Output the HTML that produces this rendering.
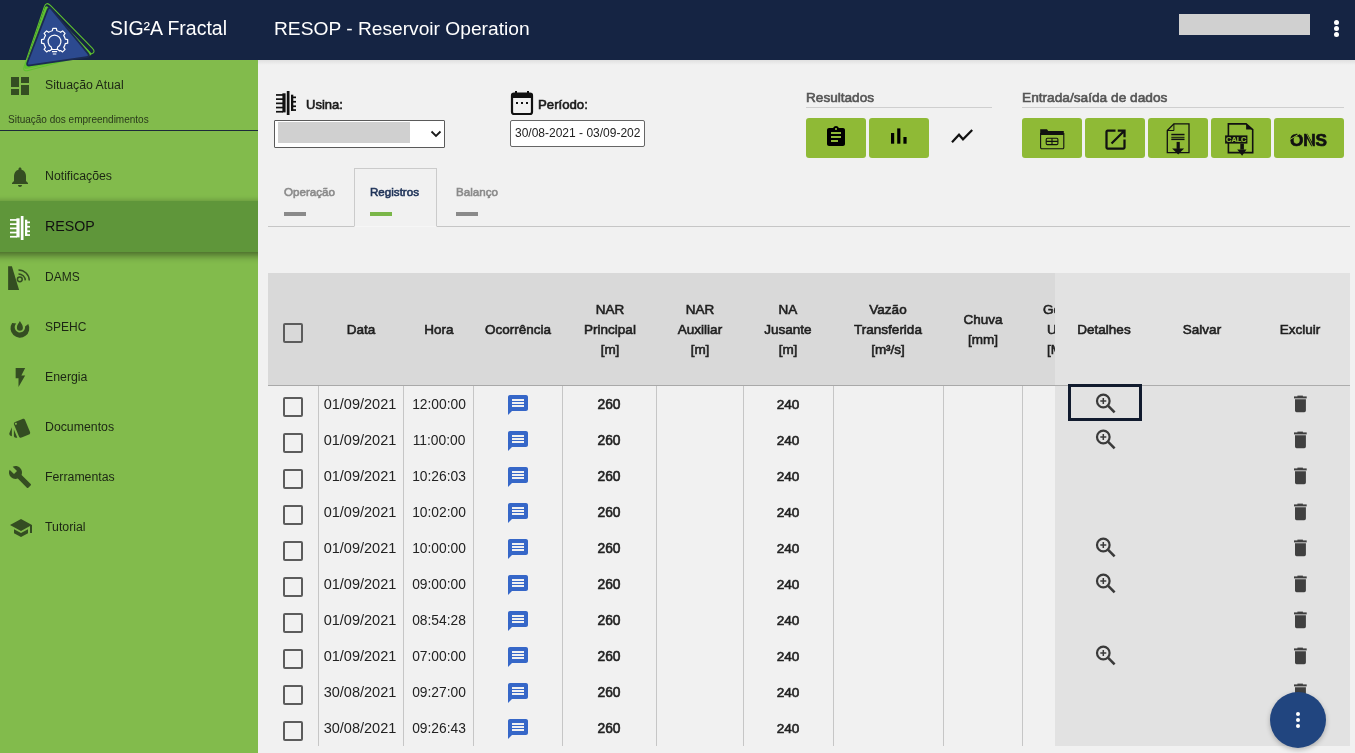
<!DOCTYPE html>
<html><head><meta charset="utf-8">
<style>
*{box-sizing:border-box;margin:0;padding:0}
html,body{width:1355px;height:753px;overflow:hidden;background:#f1f1f1;font-family:"Liberation Sans",sans-serif;color:#222}
.abs{position:absolute}
.t{position:absolute;white-space:nowrap;will-change:transform}
.gb{position:absolute;top:118px;height:40px;background:#8fba36;border-radius:3px}
.cb{position:absolute;width:20px;height:20px;border:2.4px solid #5c5c5c;border-radius:2px}
.vl{position:absolute;width:1px;background:#c6c6c6}
</style></head>
<body>
<div class="abs" style="left:0;top:0;width:1355px;height:60px;background:#152443"></div>
<div class="t" style="left:110.3px;top:19.00px;font-size:19.5px;line-height:19.5px;color:#fff;font-weight:normal;">SIG²A Fractal</div>
<div class="t" style="left:274.0px;top:19.00px;font-size:19.2px;line-height:19.2px;color:#fff;font-weight:normal;">RESOP - Reservoir Operation</div>
<div class="abs" style="left:1179px;top:14px;width:131px;height:21px;background:#d0d0d0"></div>
<div class="abs" style="left:1333.5px;top:19.5px;width:5px;height:5px;border-radius:50%;background:#fff"></div>
<div class="abs" style="left:1333.5px;top:25.5px;width:5px;height:5px;border-radius:50%;background:#fff"></div>
<div class="abs" style="left:1333.5px;top:31.5px;width:5px;height:5px;border-radius:50%;background:#fff"></div>
<div class="abs" style="left:0;top:60px;width:258px;height:693px;background:#82bb4c;overflow:hidden">
<div style="position:absolute;left:0;top:-60px;width:258px;height:753px">
<svg class="abs" style="left:8px;top:74px" width="24" height="24" viewBox="0 0 24 24"><path fill="#344d22" d="M3 13h8V3H3v10zm0 8h8v-6H3v6zm10 0h8V11h-8v10zm0-18v6h8V3h-8z"/></svg>
<div class="t" style="left:45.3px;top:79.00px;font-size:12.3px;line-height:12.3px;color:#1c2614;font-weight:normal;">Situação Atual</div>
<div class="t" style="left:8.2px;top:115.00px;font-size:10.0px;line-height:10.0px;color:#2a3a1c;font-weight:normal;">Situação dos empreendimentos</div>
<div class="abs" style="left:0;top:130px;width:258px;height:1.3px;background:#1c2a3a"></div>
<svg class="abs" style="left:8px;top:165px" width="24" height="24" viewBox="0 0 24 24"><path fill="#344d22" d="M12 22c1.1 0 2-.9 2-2h-4c0 1.1.89 2 2 2zm6-6v-5c0-3.07-1.64-5.64-4.5-6.32V4c0-.83-.67-1.5-1.5-1.5s-1.5.67-1.5 1.5v.68C7.630 5.36 6 7.92 6 11v5l-2 2v1h16v-1l-2-2z"/></svg>
<div class="t" style="left:45.3px;top:170.00px;font-size:12.3px;line-height:12.3px;color:#1c2614;font-weight:normal;">Notificações</div>
<div class="abs" style="left:-10px;top:201px;width:278px;height:51px;background:#5f963a;box-shadow:0 4px 7px rgba(0,0,0,0.38), 0 -1px 5px rgba(0,0,0,0.14)"></div>
<svg class="abs" style="left:10px;top:216px" width="20.0" height="24.0" viewBox="0 0 20 24"><g fill="#fff">
<rect x="0" y="3.1" width="7" height="1.7"/><rect x="0" y="7.3" width="7" height="1.7"/><rect x="0" y="11.5" width="7" height="1.7"/><rect x="0" y="15.7" width="7" height="1.7"/><rect x="0" y="19.9" width="7" height="1.7"/>
<rect x="6.4" y="2.3" width="3.2" height="19.1"/><rect x="10.8" y="0" width="2.7" height="24"/><rect x="15" y="3.7" width="2.3" height="16.3"/>
<rect x="15" y="5.5" width="5" height="1.7"/><rect x="15" y="9.9" width="5" height="1.7"/><rect x="15" y="14.4" width="5" height="1.7"/><rect x="15" y="18.2" width="5" height="1.7"/></g></svg>
<div class="t" style="left:44.9px;top:219.00px;font-size:14.2px;line-height:14.2px;color:#111;font-weight:normal;">RESOP</div>
<svg class="abs" style="left:6px;top:264px" width="28" height="28" viewBox="0 0 28 28"><path fill="#344d22" d="M2.1 2.2 H5.9 L13.1 26 H2.1 Z"/><g fill="none" stroke="#344d22" stroke-width="1.5"><circle cx="13.8" cy="15.3" r="2.4"/><path d="M12.5 9.9 A6.8 6.8 0 0 1 19.3 16.4"/><path d="M12.5 5.9 A10.8 10.8 0 0 1 23.3 16.6"/></g></svg>
<div class="t" style="left:45.4px;top:271.00px;font-size:12px;line-height:12px;color:#1c2614;font-weight:normal;">DAMS</div>
<svg class="abs" style="left:5px;top:315px" width="30" height="30" viewBox="0 0 30 30"><g fill="#344d22"><path d="M14.9 6 C13.6 8.5 11.9 10 11.9 12.7 A3 3 0 0 0 17.9 12.7 C17.9 10 16.2 8.5 14.9 6 Z"/><path d="M7.14 8 A9.4 9.4 0 1 0 23.26 9 L20.05 11.5 A5.2 5.2 0 1 1 11.3 8.5 Z"/></g></svg>
<div class="t" style="left:45.4px;top:321.00px;font-size:12px;line-height:12px;color:#1c2614;font-weight:normal;">SPEHC</div>
<svg class="abs" style="left:8.6px;top:366px" width="22.8" height="22.8" viewBox="0 0 24 24"><path fill="#344d22" d="M7 2v11h3v9l7-12h-4l4-8z"/></svg>
<div class="t" style="left:45.4px;top:371.00px;font-size:12.3px;line-height:12.3px;color:#1c2614;font-weight:normal;">Energia</div>
<svg class="abs" style="left:8px;top:416px" width="24" height="24" viewBox="0 0 24 24"><path fill="#344d22" d="M2.53 19.65l1.34.56v-9.03l-2.43 5.86c-.41 1.02.08 2.19 1.09 2.61zm19.5-3.7L17.07 3.98c-.31-.75-1.04-1.21-1.81-1.23-.26 0-.53.04-.79.15L7.1 5.95c-.75.31-1.21 1.03-1.23 1.8-.01.27.04.54.15.8l4.96 11.97c.31.76 1.05 1.22 1.83 1.23.26 0 .52-.05.77-.15l7.36-3.05c1.02-.42 1.51-1.59 1.09-2.6zM7.88 8.75c-.55 0-1-.45-1-1s.45-1 1-1 1 .45 1 1-.45 1-1 1zm-2 11c0 1.1.9 2 2 2h1.45l-3.45-8.34v6.34z"/></svg>
<div class="t" style="left:45.4px;top:421.00px;font-size:12.3px;line-height:12.3px;color:#1c2614;font-weight:normal;">Documentos</div>
<svg class="abs" style="left:8px;top:465px" width="24" height="24" viewBox="0 0 24 24"><path fill="#344d22" d="M22.7 19l-9.1-9.1c.9-2.3.4-5-1.5-6.9-2-2-5-2.4-7.4-1.3L9 6 6 9 1.6 4.7C.4 7.1.9 10.1 2.9 12.1c1.9 1.9 4.6 2.4 6.9 1.5l9.1 9.1c.4.4 1 .4 1.4 0l2.3-2.3c.5-.4.5-1.1.1-1.4z"/></svg>
<div class="t" style="left:45.4px;top:471.00px;font-size:12.3px;line-height:12.3px;color:#1c2614;font-weight:normal;">Ferramentas</div>
<svg class="abs" style="left:8.6px;top:516px" width="24" height="24" viewBox="0 0 24 24"><path fill="#344d22" d="M5 13.18v4L12 21l7-3.82v-4L12 17l-7-3.820zM12 3L1 9l11 6 9-4.91V17h2V9L12 3z"/></svg>
<div class="t" style="left:45.4px;top:521.00px;font-size:12.3px;line-height:12.3px;color:#1c2614;font-weight:normal;">Tutorial</div>
</div></div>
<div class="abs" style="left:258px;top:60px;width:1097px;height:5px;background:linear-gradient(rgba(0,0,0,0.07),rgba(0,0,0,0))"></div>
<svg class="abs" style="left:0;top:0" width="110" height="80" viewBox="0 0 110 80">
<path d="M50.40 5.48 Q46.20 1.20 44.28 6.88 L24.22 66.32 Q22.30 72.00 28.10 70.47 L90.70 54.03 Q96.50 52.50 92.30 48.22 Z" fill="none" stroke="#5ec12e" stroke-width="1.1"/>
<path d="M48.53 7.42 Q45.80 4.50 44.50 8.28 L24.80 65.72 Q23.50 69.50 27.42 68.68 L89.08 55.82 Q93.00 55.00 90.27 52.08 Z" fill="#5ec12e"/>
<path d="M51.55 9.29 Q49.00 6.20 47.56 9.93 L27.44 62.27 Q26.00 66.00 29.96 65.42 L86.54 57.08 Q90.50 56.50 87.95 53.41 Z" fill="#2c4a8f" stroke="#1b2b52" stroke-width="1.8"/>
<g fill="none" stroke="#fff" stroke-width="1.2" stroke-linejoin="round">
<path d="M52.48 48.80 L49.48 51.02 A10.9 10.9 0 0 1 48.62 50.51 L46.59 51.89 L44.11 49.41 L45.49 47.38 A10.9 10.9 0 0 1 43.93 43.61 L41.52 43.16 L41.52 39.64 L43.93 39.19 A10.9 10.9 0 0 1 45.49 35.42 L44.11 33.39 L46.59 30.91 L48.62 32.29 A10.9 10.9 0 0 1 52.39 30.73 L52.84 28.32 L56.36 28.32 L56.81 30.73 A10.9 10.9 0 0 1 60.58 32.29 L62.61 30.91 L65.09 33.39 L63.71 35.42 A10.9 10.9 0 0 1 65.27 39.19 L67.68 39.64 L67.68 43.16 L65.27 43.61 A10.9 10.9 0 0 1 63.71 47.38 L65.09 49.41 L62.61 51.89 L60.58 50.51 A10.9 10.9 0 0 1 59.72 51.02 L56.72 48.80 "/>
<path d="M51.3 47 A6.4 6.4 0 1 1 57.7 47 L57.2 49.5 H51.8 Z"/>
<path d="M52 51.6 H57.1 M52.8 54 H56.3"/>
</g></svg>
<svg class="abs" style="left:276px;top:91px" width="20.0" height="24.0" viewBox="0 0 20 24"><g fill="#111">
<rect x="0" y="3.1" width="7" height="1.7"/><rect x="0" y="7.3" width="7" height="1.7"/><rect x="0" y="11.5" width="7" height="1.7"/><rect x="0" y="15.7" width="7" height="1.7"/><rect x="0" y="19.9" width="7" height="1.7"/>
<rect x="6.4" y="2.3" width="3.2" height="19.1"/><rect x="10.8" y="0" width="2.7" height="24"/><rect x="15" y="3.7" width="2.3" height="16.3"/>
<rect x="15" y="5.5" width="5" height="1.7"/><rect x="15" y="9.9" width="5" height="1.7"/><rect x="15" y="14.4" width="5" height="1.7"/><rect x="15" y="18.2" width="5" height="1.7"/></g></svg>
<div class="t" style="left:306.2px;top:98.00px;font-size:13.0px;line-height:13.0px;color:#1a1a1a;font-weight:normal;-webkit-text-stroke:0.6px #1a1a1a;">Usina:</div>
<div class="abs" style="left:274px;top:120px;width:171px;height:28px;background:#fff;border:1px solid #5a5a5a;border-radius:1px"></div>
<div class="abs" style="left:278px;top:122px;width:132px;height:21px;background:#d0d0d0"></div>
<svg class="abs" style="left:430px;top:129px" width="12" height="10" viewBox="0 0 12 10"><path d="M1.5 2.5 L6 7 L10.5 2.5" fill="none" stroke="#1a1a1a" stroke-width="1.8"/></svg>
<svg class="abs" style="left:510px;top:90px" width="24" height="26" viewBox="0 0 24 26"><rect x="2" y="3.5" width="20" height="20.5" rx="2" fill="none" stroke="#111" stroke-width="2.2"/><rect x="1.5" y="3" width="21" height="5" rx="1.5" fill="#111"/><rect x="5" y="1" width="2" height="4" fill="#111"/><rect x="17" y="1" width="2" height="4" fill="#111"/><rect x="6" y="12" width="2" height="2" fill="#111"/><rect x="11" y="12" width="2" height="2" fill="#111"/><rect x="16" y="12" width="2" height="2" fill="#111"/></svg>
<div class="t" style="left:537.5px;top:98.00px;font-size:13.2px;line-height:13.2px;color:#1a1a1a;font-weight:normal;-webkit-text-stroke:0.6px #1a1a1a;">Período:</div>
<div class="abs" style="left:510px;top:120px;width:135px;height:27px;background:#fff;border:1px solid #666;border-radius:2px"></div>
<div class="abs" style="left:515px;top:121px;width:125px;height:25px;overflow:hidden"><div class="t" style="left:0.0px;top:6.00px;font-size:12px;line-height:12px;color:#222;font-weight:normal;">30/08-2021 - 03/09-2021</div>
</div>
<div class="t" style="left:806.2px;top:91.00px;font-size:13.6px;line-height:13.6px;color:#555;font-weight:normal;-webkit-text-stroke:0.6px #555;">Resultados</div>
<div class="abs" style="left:806px;top:107px;width:186px;height:1px;background:#cfcfcf"></div>
<div class="t" style="left:1022.0px;top:91.00px;font-size:13.7px;line-height:13.7px;color:#555;font-weight:normal;-webkit-text-stroke:0.6px #555;">Entrada/saída de dados</div>
<div class="abs" style="left:1022px;top:107px;width:322px;height:1px;background:#cfcfcf"></div>
<div class="gb" style="left:806px;width:60px"></div>
<div class="gb" style="left:869px;width:60px"></div>
<div class="gb" style="left:1022px;width:60px"></div>
<div class="gb" style="left:1085px;width:60px"></div>
<div class="gb" style="left:1148px;width:60px"></div>
<div class="gb" style="left:1211px;width:60px"></div>
<div class="gb" style="left:1274px;width:70px"></div>
<svg class="abs" style="left:824px;top:125px" width="24" height="24" viewBox="0 0 24 24"><path fill="#000" d="M19 3h-4.18C14.4 1.84 13.3 1 12 1c-1.3 0-2.4.84-2.82 2H5c-1.1 0-2 .9-2 2v14c0 1.1.9 2 2 2h14c1.1 0 2-.9 2-2V5c0-1.1-.9-2-2-2zm-7 0c.55 0 1 .45 1 1s-.45 1-1 1-1-.45-1-1 .45-1 1-1zm2 14H7v-2h7v2zm3-4H7v-2h10v2zm0-4H7V7h10v2z"/></svg>
<svg class="abs" style="left:888px;top:126px" width="22" height="20" viewBox="0 0 22 20"><g fill="#000"><rect x="3" y="7" width="3.2" height="10.7"/><rect x="9.2" y="2.4" width="3.2" height="15.3"/><rect x="15.4" y="11" width="3.2" height="6.7"/></g></svg>
<svg class="abs" style="left:948px;top:126px" width="28" height="20" viewBox="0 0 28 20"><path d="M4 16.2 L11 8.7 L15 13.3 L24.2 4" fill="none" stroke="#111" stroke-width="2.2"/></svg>
<svg class="abs" style="left:1038px;top:127px" width="28" height="24" viewBox="0 0 28 24"><g fill="none" stroke="#111" stroke-width="1.1"><path d="M2.6 6 V20.6 a1.2 1.2 0 0 0 1.2 1.2 H24.6 a1.2 1.2 0 0 0 1.2 -1.2 V6"/><rect x="8.2" y="11.3" width="11.7" height="6.3" rx="1.2"/><path d="M8.2 14.4 H19.9 M14 11.3 V17.6"/></g><path fill="#111" d="M2.2 2.2 H9 L10.2 4 H25.8 V8 H2.2 Z"/></svg>
<svg class="abs" style="left:1101.5px;top:125.5px" width="27" height="27" viewBox="0 0 24 24"><path fill="#111" d="M19 19H5V5h7V3H5c-1.11 0-2 .9-2 2v14c0 1.1.89 2 2 2h14c1.1 0 2-.9 2-2v-7h-2v7zM14 3v2h3.59l-9.83 9.83 1.41 1.41L19 6.41V10h2V3h-7z"/></svg>
<svg class="abs" style="left:1165px;top:121.5px" width="26" height="34" viewBox="0 0 26 34"><path d="M2.3 8.5 L8.9 1.9 H24 V30.7 H2.3 Z" fill="none" stroke="#111" stroke-width="1.3"/><path d="M2.3 8.5 L8.9 8.5 L8.9 1.9" fill="none" stroke="#111" stroke-width="1"/><g fill="#111"><rect x="6.3" y="11.8" width="13.2" height="1.5"/><rect x="6.3" y="14.8" width="13.2" height="1"/><rect x="6.3" y="16.6" width="13.2" height="1.5"/><rect x="11.6" y="19.9" width="3.2" height="7"/><path d="M7.1 26.5 H19.1 L13.2 32.4 Z"/></g></svg>
<svg class="abs" style="left:1223px;top:121.5px;will-change:transform" width="32" height="36" viewBox="0 0 32 36"><path d="M5.4 1.9 H23.1 L29.7 7.6 V30.6 H5.4 Z" fill="none" stroke="#111" stroke-width="1.6"/><path d="M23.1 1.9 L29.7 7.6 H23.1 Z" fill="#111"/><rect x="2.1" y="13.4" width="22.3" height="8.2" fill="#111"/><text x="13.25" y="20.3" text-anchor="middle" font-family="Liberation Sans" font-weight="bold" font-size="7.6" fill="#8fba36" stroke="#8fba36" stroke-width="0.2" letter-spacing="-0.2">CALC</text><rect x="17.3" y="21.6" width="3.6" height="6" fill="#111"/><path d="M14.2 27.5 H23.5 L19.1 33.8 Z" fill="#111"/></svg>
<div class="t" style="left:1289.8px;top:132.00px;font-size:17.2px;line-height:17.2px;color:#111;font-weight:bold;letter-spacing:-0.2px;-webkit-text-stroke:0.7px #111">ONS</div>
<svg class="abs" style="left:1285px;top:128px" width="50" height="22" viewBox="0 0 50 22"><path d="M19.5 1 L28 19" stroke="#8fba36" stroke-width="0.8"/><path d="M5 11.5 L14 6" stroke="#8fba36" stroke-width="1"/></svg>
<div class="abs" style="left:268px;top:226px;width:1082px;height:1px;background:#c6c6c6"></div>
<div class="abs" style="left:354px;top:168px;width:83px;height:59px;border:1px solid #cbcbcb;border-bottom:1px solid #f6f6f6;background:#f1f1f1"></div>
<div class="t" style="left:283.8px;top:186.00px;font-size:11.6px;line-height:11.6px;color:#8a8a8a;font-weight:normal;-webkit-text-stroke:0.6px #8a8a8a;">Operação</div>
<div class="abs" style="left:284px;top:212px;width:22px;height:4px;background:#8a8a8a"></div>
<div class="t" style="left:370.4px;top:186.00px;font-size:11.6px;line-height:11.6px;color:#1f3358;font-weight:normal;-webkit-text-stroke:0.6px #1f3358;">Registros</div>
<div class="abs" style="left:370px;top:212px;width:22px;height:4px;background:#7ab648"></div>
<div class="t" style="left:456.0px;top:186.00px;font-size:11.6px;line-height:11.6px;color:#8a8a8a;font-weight:normal;-webkit-text-stroke:0.6px #8a8a8a;">Balanço</div>
<div class="abs" style="left:456px;top:212px;width:22px;height:4px;background:#8a8a8a"></div>
<div class="abs" style="left:268px;top:273px;width:787px;height:112px;background:#d9d9d9"></div>
<div class="abs" style="left:268px;top:385px;width:787px;height:1px;background:#a9a9a9"></div>
<div class="vl" style="left:317.8px;top:386px;height:359.5px"></div>
<div class="vl" style="left:403.0px;top:386px;height:359.5px"></div>
<div class="vl" style="left:472.9px;top:386px;height:359.5px"></div>
<div class="vl" style="left:562.0px;top:386px;height:359.5px"></div>
<div class="vl" style="left:656.1px;top:386px;height:359.5px"></div>
<div class="vl" style="left:743.0px;top:386px;height:359.5px"></div>
<div class="vl" style="left:833.3px;top:386px;height:359.5px"></div>
<div class="vl" style="left:943.1px;top:386px;height:359.5px"></div>
<div class="vl" style="left:1022.2px;top:386px;height:359.5px"></div>
<div class="cb" style="left:283.2px;top:323px"></div>
<div class="t" style="left:260.5px;width:200px;text-align:center;top:323.00px;font-size:13.5px;line-height:13.5px;color:#1f1f1f;font-weight:normal;-webkit-text-stroke:0.6px #1f1f1f;">Data</div>
<div class="t" style="left:338.5px;width:200px;text-align:center;top:323.00px;font-size:13.5px;line-height:13.5px;color:#1f1f1f;font-weight:normal;-webkit-text-stroke:0.6px #1f1f1f;">Hora</div>
<div class="t" style="left:417.6px;width:200px;text-align:center;top:323.00px;font-size:13.5px;line-height:13.5px;color:#1f1f1f;font-weight:normal;-webkit-text-stroke:0.6px #1f1f1f;">Ocorrência</div>
<div class="t" style="left:509.6px;width:200px;text-align:center;top:303.00px;font-size:13.5px;line-height:13.5px;color:#1f1f1f;font-weight:normal;-webkit-text-stroke:0.6px #1f1f1f;">NAR</div>
<div class="t" style="left:509.6px;width:200px;text-align:center;top:323.00px;font-size:13.5px;line-height:13.5px;color:#1f1f1f;font-weight:normal;-webkit-text-stroke:0.6px #1f1f1f;">Principal</div>
<div class="t" style="left:509.6px;width:200px;text-align:center;top:343.00px;font-size:13.5px;line-height:13.5px;color:#1f1f1f;font-weight:normal;-webkit-text-stroke:0.6px #1f1f1f;">[m]</div>
<div class="t" style="left:600.0px;width:200px;text-align:center;top:303.00px;font-size:13.5px;line-height:13.5px;color:#1f1f1f;font-weight:normal;-webkit-text-stroke:0.6px #1f1f1f;">NAR</div>
<div class="t" style="left:600.0px;width:200px;text-align:center;top:323.00px;font-size:13.5px;line-height:13.5px;color:#1f1f1f;font-weight:normal;-webkit-text-stroke:0.6px #1f1f1f;">Auxiliar</div>
<div class="t" style="left:600.0px;width:200px;text-align:center;top:343.00px;font-size:13.5px;line-height:13.5px;color:#1f1f1f;font-weight:normal;-webkit-text-stroke:0.6px #1f1f1f;">[m]</div>
<div class="t" style="left:687.8px;width:200px;text-align:center;top:303.00px;font-size:13.5px;line-height:13.5px;color:#1f1f1f;font-weight:normal;-webkit-text-stroke:0.6px #1f1f1f;">NA</div>
<div class="t" style="left:687.8px;width:200px;text-align:center;top:323.00px;font-size:13.5px;line-height:13.5px;color:#1f1f1f;font-weight:normal;-webkit-text-stroke:0.6px #1f1f1f;">Jusante</div>
<div class="t" style="left:687.8px;width:200px;text-align:center;top:343.00px;font-size:13.5px;line-height:13.5px;color:#1f1f1f;font-weight:normal;-webkit-text-stroke:0.6px #1f1f1f;">[m]</div>
<div class="t" style="left:788.2px;width:200px;text-align:center;top:303.00px;font-size:13.5px;line-height:13.5px;color:#1f1f1f;font-weight:normal;-webkit-text-stroke:0.6px #1f1f1f;">Vazão</div>
<div class="t" style="left:788.2px;width:200px;text-align:center;top:323.00px;font-size:13.5px;line-height:13.5px;color:#1f1f1f;font-weight:normal;-webkit-text-stroke:0.6px #1f1f1f;">Transferida</div>
<div class="t" style="left:788.2px;width:200px;text-align:center;top:343.00px;font-size:13.5px;line-height:13.5px;color:#1f1f1f;font-weight:normal;-webkit-text-stroke:0.6px #1f1f1f;">[m³/s]</div>
<div class="t" style="left:1042.8px;top:303.00px;font-size:13.5px;line-height:13.5px;color:#1f1f1f;font-weight:normal;-webkit-text-stroke:0.6px #1f1f1f;">Geração</div>
<div class="t" style="left:1046.8px;top:323.00px;font-size:13.5px;line-height:13.5px;color:#1f1f1f;font-weight:normal;-webkit-text-stroke:0.6px #1f1f1f;">Usina</div>
<div class="t" style="left:1046.6px;top:343.00px;font-size:13.5px;line-height:13.5px;color:#1f1f1f;font-weight:normal;-webkit-text-stroke:0.6px #1f1f1f;">[MWh]</div>
<div class="t" style="left:883.0px;width:200px;text-align:center;top:313.00px;font-size:13.5px;line-height:13.5px;color:#1f1f1f;font-weight:normal;-webkit-text-stroke:0.6px #1f1f1f;">Chuva</div>
<div class="t" style="left:883.0px;width:200px;text-align:center;top:333.00px;font-size:13.5px;line-height:13.5px;color:#1f1f1f;font-weight:normal;-webkit-text-stroke:0.6px #1f1f1f;">[mm]</div>
<div class="cb" style="left:283.3px;top:397.2px"></div>
<div class="t" style="left:260.1px;width:200px;text-align:center;top:397.00px;font-size:14.5px;line-height:14.5px;color:#222;font-weight:normal;">01/09/2021</div>
<div class="t" style="left:338.6px;width:200px;text-align:center;top:398.00px;font-size:13.8px;line-height:13.8px;color:#222;font-weight:normal;">12:00:00</div>
<svg class="abs" style="left:506px;top:393px" width="24" height="24" viewBox="0 0 24 24"><path fill="#3667c8" d="M20 2H4c-1.1 0-1.99.9-1.99 2L2 22l4-4h14c1.1 0 2-.9 2-2V4c0-1.1-.9-2-2-2zm-2 12H6v-2h12v2zm0-3H6V9h12v2zm0-3H6V6h12v2z"/></svg>
<div class="t" style="left:509.3px;width:200px;text-align:center;top:398.00px;font-size:13.8px;line-height:13.8px;color:#222;font-weight:normal;-webkit-text-stroke:0.6px #222;">260</div>
<div class="t" style="left:687.8px;width:200px;text-align:center;top:398.00px;font-size:13.6px;line-height:13.6px;color:#222;font-weight:normal;-webkit-text-stroke:0.6px #222;">240</div>
<div class="cb" style="left:283.3px;top:433.2px"></div>
<div class="t" style="left:260.1px;width:200px;text-align:center;top:433.00px;font-size:14.5px;line-height:14.5px;color:#222;font-weight:normal;">01/09/2021</div>
<div class="t" style="left:338.6px;width:200px;text-align:center;top:434.00px;font-size:13.8px;line-height:13.8px;color:#222;font-weight:normal;">11:00:00</div>
<svg class="abs" style="left:506px;top:429px" width="24" height="24" viewBox="0 0 24 24"><path fill="#3667c8" d="M20 2H4c-1.1 0-1.99.9-1.99 2L2 22l4-4h14c1.1 0 2-.9 2-2V4c0-1.1-.9-2-2-2zm-2 12H6v-2h12v2zm0-3H6V9h12v2zm0-3H6V6h12v2z"/></svg>
<div class="t" style="left:509.3px;width:200px;text-align:center;top:434.00px;font-size:13.8px;line-height:13.8px;color:#222;font-weight:normal;-webkit-text-stroke:0.6px #222;">260</div>
<div class="t" style="left:687.8px;width:200px;text-align:center;top:434.00px;font-size:13.6px;line-height:13.6px;color:#222;font-weight:normal;-webkit-text-stroke:0.6px #222;">240</div>
<div class="cb" style="left:283.3px;top:469.2px"></div>
<div class="t" style="left:260.1px;width:200px;text-align:center;top:469.00px;font-size:14.5px;line-height:14.5px;color:#222;font-weight:normal;">01/09/2021</div>
<div class="t" style="left:338.6px;width:200px;text-align:center;top:470.00px;font-size:13.8px;line-height:13.8px;color:#222;font-weight:normal;">10:26:03</div>
<svg class="abs" style="left:506px;top:465px" width="24" height="24" viewBox="0 0 24 24"><path fill="#3667c8" d="M20 2H4c-1.1 0-1.99.9-1.99 2L2 22l4-4h14c1.1 0 2-.9 2-2V4c0-1.1-.9-2-2-2zm-2 12H6v-2h12v2zm0-3H6V9h12v2zm0-3H6V6h12v2z"/></svg>
<div class="t" style="left:509.3px;width:200px;text-align:center;top:470.00px;font-size:13.8px;line-height:13.8px;color:#222;font-weight:normal;-webkit-text-stroke:0.6px #222;">260</div>
<div class="t" style="left:687.8px;width:200px;text-align:center;top:470.00px;font-size:13.6px;line-height:13.6px;color:#222;font-weight:normal;-webkit-text-stroke:0.6px #222;">240</div>
<div class="cb" style="left:283.3px;top:505.2px"></div>
<div class="t" style="left:260.1px;width:200px;text-align:center;top:505.00px;font-size:14.5px;line-height:14.5px;color:#222;font-weight:normal;">01/09/2021</div>
<div class="t" style="left:338.6px;width:200px;text-align:center;top:506.00px;font-size:13.8px;line-height:13.8px;color:#222;font-weight:normal;">10:02:00</div>
<svg class="abs" style="left:506px;top:501px" width="24" height="24" viewBox="0 0 24 24"><path fill="#3667c8" d="M20 2H4c-1.1 0-1.99.9-1.99 2L2 22l4-4h14c1.1 0 2-.9 2-2V4c0-1.1-.9-2-2-2zm-2 12H6v-2h12v2zm0-3H6V9h12v2zm0-3H6V6h12v2z"/></svg>
<div class="t" style="left:509.3px;width:200px;text-align:center;top:506.00px;font-size:13.8px;line-height:13.8px;color:#222;font-weight:normal;-webkit-text-stroke:0.6px #222;">260</div>
<div class="t" style="left:687.8px;width:200px;text-align:center;top:506.00px;font-size:13.6px;line-height:13.6px;color:#222;font-weight:normal;-webkit-text-stroke:0.6px #222;">240</div>
<div class="cb" style="left:283.3px;top:541.2px"></div>
<div class="t" style="left:260.1px;width:200px;text-align:center;top:541.00px;font-size:14.5px;line-height:14.5px;color:#222;font-weight:normal;">01/09/2021</div>
<div class="t" style="left:338.6px;width:200px;text-align:center;top:542.00px;font-size:13.8px;line-height:13.8px;color:#222;font-weight:normal;">10:00:00</div>
<svg class="abs" style="left:506px;top:537px" width="24" height="24" viewBox="0 0 24 24"><path fill="#3667c8" d="M20 2H4c-1.1 0-1.99.9-1.99 2L2 22l4-4h14c1.1 0 2-.9 2-2V4c0-1.1-.9-2-2-2zm-2 12H6v-2h12v2zm0-3H6V9h12v2zm0-3H6V6h12v2z"/></svg>
<div class="t" style="left:509.3px;width:200px;text-align:center;top:542.00px;font-size:13.8px;line-height:13.8px;color:#222;font-weight:normal;-webkit-text-stroke:0.6px #222;">260</div>
<div class="t" style="left:687.8px;width:200px;text-align:center;top:542.00px;font-size:13.6px;line-height:13.6px;color:#222;font-weight:normal;-webkit-text-stroke:0.6px #222;">240</div>
<div class="cb" style="left:283.3px;top:577.2px"></div>
<div class="t" style="left:260.1px;width:200px;text-align:center;top:577.00px;font-size:14.5px;line-height:14.5px;color:#222;font-weight:normal;">01/09/2021</div>
<div class="t" style="left:338.6px;width:200px;text-align:center;top:578.00px;font-size:13.8px;line-height:13.8px;color:#222;font-weight:normal;">09:00:00</div>
<svg class="abs" style="left:506px;top:573px" width="24" height="24" viewBox="0 0 24 24"><path fill="#3667c8" d="M20 2H4c-1.1 0-1.99.9-1.99 2L2 22l4-4h14c1.1 0 2-.9 2-2V4c0-1.1-.9-2-2-2zm-2 12H6v-2h12v2zm0-3H6V9h12v2zm0-3H6V6h12v2z"/></svg>
<div class="t" style="left:509.3px;width:200px;text-align:center;top:578.00px;font-size:13.8px;line-height:13.8px;color:#222;font-weight:normal;-webkit-text-stroke:0.6px #222;">260</div>
<div class="t" style="left:687.8px;width:200px;text-align:center;top:578.00px;font-size:13.6px;line-height:13.6px;color:#222;font-weight:normal;-webkit-text-stroke:0.6px #222;">240</div>
<div class="cb" style="left:283.3px;top:613.2px"></div>
<div class="t" style="left:260.1px;width:200px;text-align:center;top:613.00px;font-size:14.5px;line-height:14.5px;color:#222;font-weight:normal;">01/09/2021</div>
<div class="t" style="left:338.6px;width:200px;text-align:center;top:614.00px;font-size:13.8px;line-height:13.8px;color:#222;font-weight:normal;">08:54:28</div>
<svg class="abs" style="left:506px;top:609px" width="24" height="24" viewBox="0 0 24 24"><path fill="#3667c8" d="M20 2H4c-1.1 0-1.99.9-1.99 2L2 22l4-4h14c1.1 0 2-.9 2-2V4c0-1.1-.9-2-2-2zm-2 12H6v-2h12v2zm0-3H6V9h12v2zm0-3H6V6h12v2z"/></svg>
<div class="t" style="left:509.3px;width:200px;text-align:center;top:614.00px;font-size:13.8px;line-height:13.8px;color:#222;font-weight:normal;-webkit-text-stroke:0.6px #222;">260</div>
<div class="t" style="left:687.8px;width:200px;text-align:center;top:614.00px;font-size:13.6px;line-height:13.6px;color:#222;font-weight:normal;-webkit-text-stroke:0.6px #222;">240</div>
<div class="cb" style="left:283.3px;top:649.2px"></div>
<div class="t" style="left:260.1px;width:200px;text-align:center;top:649.00px;font-size:14.5px;line-height:14.5px;color:#222;font-weight:normal;">01/09/2021</div>
<div class="t" style="left:338.6px;width:200px;text-align:center;top:650.00px;font-size:13.8px;line-height:13.8px;color:#222;font-weight:normal;">07:00:00</div>
<svg class="abs" style="left:506px;top:645px" width="24" height="24" viewBox="0 0 24 24"><path fill="#3667c8" d="M20 2H4c-1.1 0-1.99.9-1.99 2L2 22l4-4h14c1.1 0 2-.9 2-2V4c0-1.1-.9-2-2-2zm-2 12H6v-2h12v2zm0-3H6V9h12v2zm0-3H6V6h12v2z"/></svg>
<div class="t" style="left:509.3px;width:200px;text-align:center;top:650.00px;font-size:13.8px;line-height:13.8px;color:#222;font-weight:normal;-webkit-text-stroke:0.6px #222;">260</div>
<div class="t" style="left:687.8px;width:200px;text-align:center;top:650.00px;font-size:13.6px;line-height:13.6px;color:#222;font-weight:normal;-webkit-text-stroke:0.6px #222;">240</div>
<div class="cb" style="left:283.3px;top:685.2px"></div>
<div class="t" style="left:260.1px;width:200px;text-align:center;top:685.00px;font-size:14.5px;line-height:14.5px;color:#222;font-weight:normal;">30/08/2021</div>
<div class="t" style="left:338.6px;width:200px;text-align:center;top:686.00px;font-size:13.8px;line-height:13.8px;color:#222;font-weight:normal;">09:27:00</div>
<svg class="abs" style="left:506px;top:681px" width="24" height="24" viewBox="0 0 24 24"><path fill="#3667c8" d="M20 2H4c-1.1 0-1.99.9-1.99 2L2 22l4-4h14c1.1 0 2-.9 2-2V4c0-1.1-.9-2-2-2zm-2 12H6v-2h12v2zm0-3H6V9h12v2zm0-3H6V6h12v2z"/></svg>
<div class="t" style="left:509.3px;width:200px;text-align:center;top:686.00px;font-size:13.8px;line-height:13.8px;color:#222;font-weight:normal;-webkit-text-stroke:0.6px #222;">260</div>
<div class="t" style="left:687.8px;width:200px;text-align:center;top:686.00px;font-size:13.6px;line-height:13.6px;color:#222;font-weight:normal;-webkit-text-stroke:0.6px #222;">240</div>
<div class="cb" style="left:283.3px;top:721.2px"></div>
<div class="t" style="left:260.1px;width:200px;text-align:center;top:721.00px;font-size:14.5px;line-height:14.5px;color:#222;font-weight:normal;">30/08/2021</div>
<div class="t" style="left:338.6px;width:200px;text-align:center;top:722.00px;font-size:13.8px;line-height:13.8px;color:#222;font-weight:normal;">09:26:43</div>
<svg class="abs" style="left:506px;top:717px" width="24" height="24" viewBox="0 0 24 24"><path fill="#3667c8" d="M20 2H4c-1.1 0-1.99.9-1.99 2L2 22l4-4h14c1.1 0 2-.9 2-2V4c0-1.1-.9-2-2-2zm-2 12H6v-2h12v2zm0-3H6V9h12v2zm0-3H6V6h12v2z"/></svg>
<div class="t" style="left:509.3px;width:200px;text-align:center;top:722.00px;font-size:13.8px;line-height:13.8px;color:#222;font-weight:normal;-webkit-text-stroke:0.6px #222;">260</div>
<div class="t" style="left:687.8px;width:200px;text-align:center;top:722.00px;font-size:13.6px;line-height:13.6px;color:#222;font-weight:normal;-webkit-text-stroke:0.6px #222;">240</div>
<div class="abs" style="left:1055px;top:273px;width:295px;height:472.6px;background:#e2e2e2"></div>
<div class="abs" style="left:1055px;top:385px;width:295px;height:1px;background:#acacac"></div>
<div class="t" style="left:1004.0px;width:200px;text-align:center;top:323.00px;font-size:13.5px;line-height:13.5px;color:#1f1f1f;font-weight:normal;-webkit-text-stroke:0.6px #1f1f1f;">Detalhes</div>
<div class="t" style="left:1101.9px;width:200px;text-align:center;top:323.00px;font-size:13.5px;line-height:13.5px;color:#1f1f1f;font-weight:normal;-webkit-text-stroke:0.6px #1f1f1f;">Salvar</div>
<div class="t" style="left:1200.4px;width:200px;text-align:center;top:323.00px;font-size:13.5px;line-height:13.5px;color:#1f1f1f;font-weight:normal;-webkit-text-stroke:0.6px #1f1f1f;">Excluir</div>
<svg class="abs" style="left:1093px;top:390px" width="26" height="26" viewBox="0 0 26 26"><g fill="none" stroke="#3a3a3a"><circle cx="10.3" cy="11" r="6.3" stroke-width="2.2"/><path d="M15.2 15.9 L21.6 22.3" stroke-width="2.6"/><path d="M10.3 8 V14 M7.3 11 H13.3" stroke-width="1.5"/></g></svg>
<svg class="abs" style="left:1290px;top:391px" width="20" height="24" viewBox="0 0 20 24"><g fill="#404040"><path d="M4 5.4 H16.7 V7.4 H4 Z"/><path d="M7.4 4.6 H12.9 V6 H7.4 Z"/><path d="M5 8.2 H15.9 V19.6 a1.6 1.6 0 0 1 -1.6 1.6 H6.6 a1.6 1.6 0 0 1 -1.6 -1.6 Z"/></g></svg>
<svg class="abs" style="left:1093px;top:426px" width="26" height="26" viewBox="0 0 26 26"><g fill="none" stroke="#3a3a3a"><circle cx="10.3" cy="11" r="6.3" stroke-width="2.2"/><path d="M15.2 15.9 L21.6 22.3" stroke-width="2.6"/><path d="M10.3 8 V14 M7.3 11 H13.3" stroke-width="1.5"/></g></svg>
<svg class="abs" style="left:1290px;top:427px" width="20" height="24" viewBox="0 0 20 24"><g fill="#404040"><path d="M4 5.4 H16.7 V7.4 H4 Z"/><path d="M7.4 4.6 H12.9 V6 H7.4 Z"/><path d="M5 8.2 H15.9 V19.6 a1.6 1.6 0 0 1 -1.6 1.6 H6.6 a1.6 1.6 0 0 1 -1.6 -1.6 Z"/></g></svg>
<svg class="abs" style="left:1290px;top:463px" width="20" height="24" viewBox="0 0 20 24"><g fill="#404040"><path d="M4 5.4 H16.7 V7.4 H4 Z"/><path d="M7.4 4.6 H12.9 V6 H7.4 Z"/><path d="M5 8.2 H15.9 V19.6 a1.6 1.6 0 0 1 -1.6 1.6 H6.6 a1.6 1.6 0 0 1 -1.6 -1.6 Z"/></g></svg>
<svg class="abs" style="left:1290px;top:499px" width="20" height="24" viewBox="0 0 20 24"><g fill="#404040"><path d="M4 5.4 H16.7 V7.4 H4 Z"/><path d="M7.4 4.6 H12.9 V6 H7.4 Z"/><path d="M5 8.2 H15.9 V19.6 a1.6 1.6 0 0 1 -1.6 1.6 H6.6 a1.6 1.6 0 0 1 -1.6 -1.6 Z"/></g></svg>
<svg class="abs" style="left:1093px;top:534px" width="26" height="26" viewBox="0 0 26 26"><g fill="none" stroke="#3a3a3a"><circle cx="10.3" cy="11" r="6.3" stroke-width="2.2"/><path d="M15.2 15.9 L21.6 22.3" stroke-width="2.6"/><path d="M10.3 8 V14 M7.3 11 H13.3" stroke-width="1.5"/></g></svg>
<svg class="abs" style="left:1290px;top:535px" width="20" height="24" viewBox="0 0 20 24"><g fill="#404040"><path d="M4 5.4 H16.7 V7.4 H4 Z"/><path d="M7.4 4.6 H12.9 V6 H7.4 Z"/><path d="M5 8.2 H15.9 V19.6 a1.6 1.6 0 0 1 -1.6 1.6 H6.6 a1.6 1.6 0 0 1 -1.6 -1.6 Z"/></g></svg>
<svg class="abs" style="left:1093px;top:570px" width="26" height="26" viewBox="0 0 26 26"><g fill="none" stroke="#3a3a3a"><circle cx="10.3" cy="11" r="6.3" stroke-width="2.2"/><path d="M15.2 15.9 L21.6 22.3" stroke-width="2.6"/><path d="M10.3 8 V14 M7.3 11 H13.3" stroke-width="1.5"/></g></svg>
<svg class="abs" style="left:1290px;top:571px" width="20" height="24" viewBox="0 0 20 24"><g fill="#404040"><path d="M4 5.4 H16.7 V7.4 H4 Z"/><path d="M7.4 4.6 H12.9 V6 H7.4 Z"/><path d="M5 8.2 H15.9 V19.6 a1.6 1.6 0 0 1 -1.6 1.6 H6.6 a1.6 1.6 0 0 1 -1.6 -1.6 Z"/></g></svg>
<svg class="abs" style="left:1290px;top:607px" width="20" height="24" viewBox="0 0 20 24"><g fill="#404040"><path d="M4 5.4 H16.7 V7.4 H4 Z"/><path d="M7.4 4.6 H12.9 V6 H7.4 Z"/><path d="M5 8.2 H15.9 V19.6 a1.6 1.6 0 0 1 -1.6 1.6 H6.6 a1.6 1.6 0 0 1 -1.6 -1.6 Z"/></g></svg>
<svg class="abs" style="left:1093px;top:642px" width="26" height="26" viewBox="0 0 26 26"><g fill="none" stroke="#3a3a3a"><circle cx="10.3" cy="11" r="6.3" stroke-width="2.2"/><path d="M15.2 15.9 L21.6 22.3" stroke-width="2.6"/><path d="M10.3 8 V14 M7.3 11 H13.3" stroke-width="1.5"/></g></svg>
<svg class="abs" style="left:1290px;top:643px" width="20" height="24" viewBox="0 0 20 24"><g fill="#404040"><path d="M4 5.4 H16.7 V7.4 H4 Z"/><path d="M7.4 4.6 H12.9 V6 H7.4 Z"/><path d="M5 8.2 H15.9 V19.6 a1.6 1.6 0 0 1 -1.6 1.6 H6.6 a1.6 1.6 0 0 1 -1.6 -1.6 Z"/></g></svg>
<svg class="abs" style="left:1290px;top:679px" width="20" height="24" viewBox="0 0 20 24"><g fill="#404040"><path d="M4 5.4 H16.7 V7.4 H4 Z"/><path d="M7.4 4.6 H12.9 V6 H7.4 Z"/><path d="M5 8.2 H15.9 V19.6 a1.6 1.6 0 0 1 -1.6 1.6 H6.6 a1.6 1.6 0 0 1 -1.6 -1.6 Z"/></g></svg>
<svg class="abs" style="left:1290px;top:715px" width="20" height="24" viewBox="0 0 20 24"><g fill="#404040"><path d="M4 5.4 H16.7 V7.4 H4 Z"/><path d="M7.4 4.6 H12.9 V6 H7.4 Z"/><path d="M5 8.2 H15.9 V19.6 a1.6 1.6 0 0 1 -1.6 1.6 H6.6 a1.6 1.6 0 0 1 -1.6 -1.6 Z"/></g></svg>
<div class="abs" style="left:1068px;top:384px;width:74px;height:37px;border:3.6px solid #111b2e"></div>
<div class="abs" style="left:1269.8px;top:691.8px;width:56.4px;height:56.4px;border-radius:50%;background:#21457f;box-shadow:0 2px 5px rgba(0,0,0,0.25)"></div>
<div class="abs" style="left:1295.7px;top:711.8px;width:4.6px;height:4.6px;border-radius:50%;background:#fff"></div>
<div class="abs" style="left:1295.7px;top:717.6px;width:4.6px;height:4.6px;border-radius:50%;background:#fff"></div>
<div class="abs" style="left:1295.7px;top:723.6px;width:4.6px;height:4.6px;border-radius:50%;background:#fff"></div>
</body></html>
